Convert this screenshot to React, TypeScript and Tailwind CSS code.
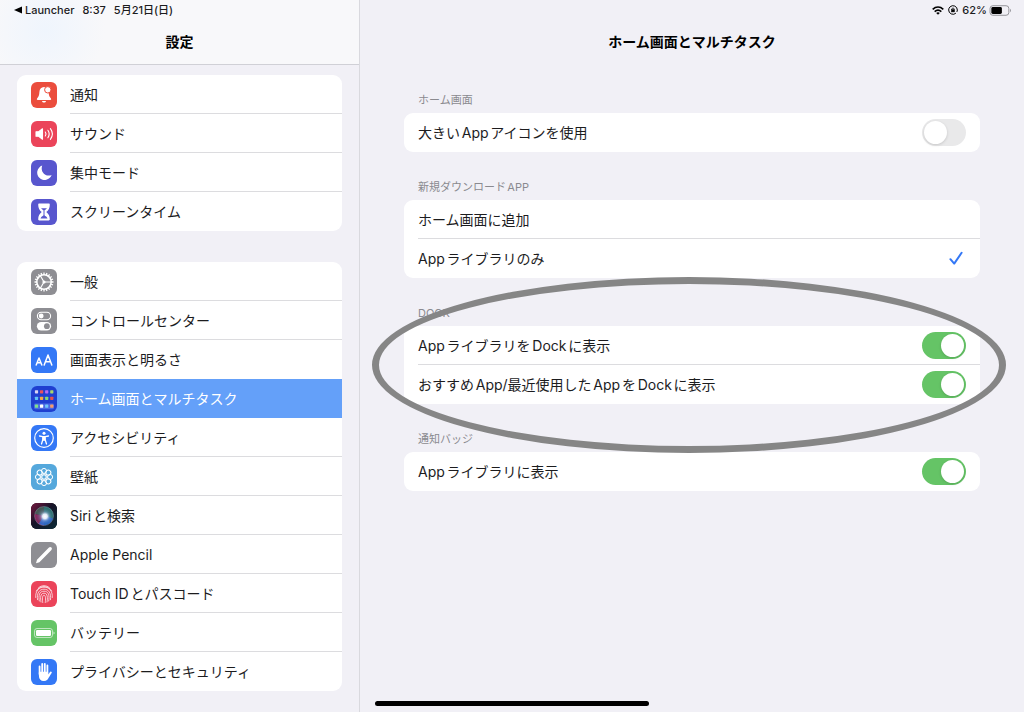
import { useState } from "react";
import type { ReactNode } from "react";

const spokes = Array.from({ length: 20 }, (_, i) => i * 18);
const petals = Array.from({ length: 8 }, (_, i) => i * 45);
const appColors = [
  ["#d8d4f2", "#e8505b", "#b56cf0", "#a8d66a"],
  ["#5fc3f5", "#f5a742", "#7fd877", "#e8504a"],
  ["#7fe08a", "#ffffff", "#6fc6f7", "#f59a6a"],
];

const icons: Record<string, ReactNode> = {
  notifications: (
    <g fill="#fff">
      <path d="M13 5c-3 0-4.4 2.2-4.6 5-.2 3.600-.8 4.700-2 6-.9 1-.7 2 .4 2h12.400c1.100 0 1.300-1 .4-2-1.200-1.300-1.800-2.400-2-6C17.400 7.200 16 5 13 5z" />
      <path d="M11 19h4c-.2 1-1 1.500-2 1.500s-1.800-.5-2-1.500z" />
      <circle cx="16.800" cy="7.800" r="3.200" stroke="#eb4d3d" strokeWidth="1" />
    </g>
  ),
  sounds: (
    <g fill="none" stroke="#fff" strokeWidth="1.100" strokeLinecap="round">
      <path d="M5 10.800h2.700L11.500 7.800v10.400L7.700 15.300H5z" fill="#fff" strokeLinejoin="round" />
      <path d="M14.300 11c.9 1.200.9 2.800 0 4M16.900 9.300c1.600 2.300 1.600 5.100 0 7.400M19.400 7.700c2.500 3.300 2.500 7.300 0 10.600" />
    </g>
  ),
  focus: <path d="M11.200 5.600A7.400 7.400 0 1 0 20.600 15C15.500 17.300 8.800 12.500 11.200 5.600z" fill="#fff" />,
  screenTime: (
    <g>
      <path d="M8.200 4.500h9.600c.6 0 1 .5 1 1.200 0 3.500-1.300 5.500-3.500 7.300 2.200 1.800 3.500 3.800 3.500 7.300 0 .7-.4 1.200-1 1.200H8.200c-.6 0-1-.5-1-1.200 0-3.500 1.300-5.500 3.500-7.300C8.500 11.200 7.200 9.200 7.200 5.700c0-.7.400-1.200 1-1.200z" fill="#fff" />
      <path d="M10 9.200h6L13 12zM9.500 19.500c.7-1.900 2-2.300 3-3.300V12h1v4.200c1 1 2.300 1.400 3 3.300z" fill="#5856ce" />
    </g>
  ),
  general: (
    <g fill="none" stroke="#fff">
      <circle cx="13" cy="13" r="7.200" strokeWidth="1.600" />
      <circle cx="13" cy="13" r="1.600" fill="#fff" stroke="none" />
      <path d="M13 13h7M13 13 9.500 7M13 13 9.500 19" strokeWidth="1.200" />
      {spokes.map((deg) => (
        <path key={deg} d="M13 5.700V3.500" strokeWidth="1.300" transform={`rotate(${deg} 13 13)`} />
      ))}
    </g>
  ),
  controlCenter: (
    <g>
      <rect x="6.400" y="4.300" width="13.200" height="7.400" rx="3.700" fill="none" stroke="#fff" strokeWidth="1.100" />
      <circle cx="10.200" cy="8" r="2.400" fill="#fff" />
      <rect x="5.900" y="14" width="14.200" height="8.400" rx="4.200" fill="#fff" />
      <circle cx="15.900" cy="18.200" r="2.900" fill="#8e8e93" />
    </g>
  ),
  display: (
    <g fill="none" stroke="#fff" strokeWidth="1.500" strokeLinecap="round" strokeLinejoin="round">
      <path d="M5.200 18l2.800-7L10.800 18M6.200 15.800h3.600" />
      <path d="M13.200 18L17 8L20.800 18M14.500 14.800h5" />
    </g>
  ),
  homeScreen: (
    <g>
      <rect x="3" y="17.600" width="20" height="5.600" rx="1.400" fill="#4a68e4" />
      {appColors.map((row, r) =>
        row.map((fill, c) => (
          <rect key={`${r}-${c}`} x={3.900 + c * 5.100} y={4.200 + r * 7.200 - (r === 1 ? 0.700 : 0)} width="3.200" height="3.200" rx=".6" fill={fill} />
        ))
      )}
    </g>
  ),
  accessibility: (
    <g fill="none" stroke="#fff" strokeLinecap="round" strokeLinejoin="round">
      <circle cx="13" cy="13" r="9.300" strokeWidth="1.200" />
      <circle cx="13" cy="8.300" r="1.500" fill="#fff" stroke="none" />
      <path d="M8.500 11l3.200.7h2.600l3.200-.7M11.800 12.500v2.300L10.500 19M14.200 12.500v2.300L15.500 19" strokeWidth="1.300" />
      <path d="M12 11.500h2v4h-2z" fill="#fff" strokeWidth=".5" />
    </g>
  ),
  wallpaper: (
    <g fill="none" stroke="#fff" strokeWidth="1">
      <circle cx="13" cy="13" r="2.200" />
      {petals.map((deg) => (
        <g key={deg} transform={`rotate(${deg} 13 13)`}>
          <circle cx="13" cy="6.900" r="2.500" />
          <circle cx="13" cy="10" r="1.100" fill="#fff" stroke="none" opacity=".6" />
        </g>
      ))}
    </g>
  ),
  siri: (
    <g>
      <defs>
        <linearGradient id="siriBack" x1="0" y1="0" x2="1" y2="1">
          <stop offset="0" stopColor="#7a1840" />
          <stop offset=".45" stopColor="#161428" />
          <stop offset="1" stopColor="#0c2c38" />
        </linearGradient>
        <radialGradient id="siriGlow" cx=".55" cy=".52" r=".5">
          <stop offset="0" stopColor="#fff" />
          <stop offset=".25" stopColor="#e4ecf8" />
          <stop offset=".5" stopColor="#8aa4d0" stopOpacity=".45" />
          <stop offset="1" stopColor="#2a3560" stopOpacity="0" />
        </radialGradient>
      </defs>
      <rect width="26" height="26" fill="url(#siriBack)" />
      <path d="M13 3.500c7 0 11 6 9 12L13 13z" fill="#2f8f80" opacity=".8" />
      <path d="M3.800 11c1-5 5-7.500 9.200-7.500V13z" fill="#4d6b5c" opacity=".8" />
      <path d="M3.800 11C2.500 18 8 23 13 22.500L14 13z" fill="#a62f6d" opacity=".8" />
      <path d="M8 20.500c5 4 12 1 14-5L13 12z" fill="#2675e8" opacity=".85" />
      <circle cx="13" cy="13" r="9.500" fill="url(#siriGlow)" stroke="#8b93ae" strokeOpacity=".6" strokeWidth=".7" />
    </g>
  ),
  pencil: (
    <path d="M5 21.300l1-3.500L17.700 5.700c.9-.9 2-.9 2.700-.2s.7 1.800-.2 2.700L8.400 20.200z" fill="#fff" />
  ),
  touchId: (
    <g fill="none" stroke="#fff" strokeWidth=".8" strokeLinecap="round" opacity=".9">
      <path d="M7.500 6.800c3.200-2.900 7.800-2.900 11 0M5.300 10c3-6 12.400-6 15.400 0M4.700 16.500c-.5-7 3.500-10.300 8.300-10.300s8.800 3.300 8.300 10.300" />
      <path d="M6.500 18.700C5.500 12 8.500 8.200 13 8.200s7.500 3.800 6.500 10.500M8.300 20c-1-5.500 0-9.800 4.700-9.800s5.700 4.300 4.700 9.800" />
      <path d="M10 21c-.8-4-.8-8.800 3-8.800s3.800 4.800 3 8.800M11.700 21.500c-.4-3-.6-7.300 1.300-7.300s1.700 4.300 1.300 7.300" />
    </g>
  ),
  battery: (
    <g>
      <rect x="3.500" y="8.500" width="18" height="9" rx="2.500" fill="none" stroke="#fff" strokeOpacity=".65" strokeWidth=".9" />
      <rect x="5" y="10" width="15" height="6" rx="1.200" fill="#fff" />
      <path d="M22.500 11.500c1.400.5 1.400 2.500 0 3z" fill="#fff" opacity=".7" />
    </g>
  ),
  privacy: (
    <g stroke="#fff" strokeWidth="1.800" strokeLinecap="round" fill="none">
      <path d="M8.600 7.500V15M11.200 5V14M13.800 4.800V14M16.400 6.500V15" />
      <path d="M19.800 13.500l-2.400 3.700" strokeWidth="2" />
      <path d="M8.600 13.500h7.800v3l1.500-.5c-1 3.500-2.700 5.300-5 5.300-2.800 0-4.300-2.300-4.300-5.300z" fill="#fff" strokeWidth="1.500" strokeLinejoin="round" />
    </g>
  ),
};

interface NavItem {
  id: string;
  label: string;
  color: string;
}

const navGroups: NavItem[][] = [
  [
    { id: "notifications", label: "通知", color: "bg-[#eb4d3d]" },
    { id: "sounds", label: "サウンド", color: "bg-[#eb445a]" },
    { id: "focus", label: "集中モード", color: "bg-[#5856ce]" },
    { id: "screenTime", label: "スクリーンタイム", color: "bg-[#5856ce]" },
  ],
  [
    { id: "general", label: "一般", color: "bg-[#8e8e93]" },
    { id: "controlCenter", label: "コントロールセンター", color: "bg-[#8e8e93]" },
    { id: "display", label: "画面表示と明るさ", color: "bg-[#3478f6]" },
    { id: "homeScreen", label: "ホーム画面とマルチタスク", color: "bg-[#1f3fd0]" },
    { id: "accessibility", label: "アクセシビリティ", color: "bg-[#3478f6]" },
    { id: "wallpaper", label: "壁紙", color: "bg-[#55a8dc]" },
    { id: "siri", label: "Siriと検索", color: "bg-black" },
    { id: "pencil", label: "Apple Pencil", color: "bg-[#8e8e93]" },
    { id: "touchId", label: "Touch IDとパスコード", color: "bg-[#eb445a]" },
    { id: "battery", label: "バッテリー", color: "bg-[#65c466]" },
    { id: "privacy", label: "プライバシーとセキュリティ", color: "bg-[#3478f6]" },
  ],
];

function NavGroup({ items, selected, onSelect }: { items: NavItem[]; selected: string; onSelect: (id: string) => void }) {
  return (
    <ul className="overflow-hidden rounded-[9px] bg-white">
      {items.map((item, i) => {
        const active = item.id === selected;
        const hideLine = i === items.length - 1 || active || items[i + 1].id === selected;
        return (
          <li key={item.id}>
            <a
              href={`#${item.id}`}
              aria-current={active ? "page" : undefined}
              onClick={() => onSelect(item.id)}
              className={`flex h-[39px] items-center gap-[13px] pl-[14px] ${active ? "bg-[#64a0f9] text-white" : ""}`}
            >
              <span className={`size-[26px] shrink-0 overflow-hidden rounded-md ${item.color}`}>
                <svg viewBox="0 0 26 26" className="size-full" aria-hidden="true">
                  {icons[item.id]}
                </svg>
              </span>
              <span className={`flex h-full flex-1 items-center border-b ${hideLine ? "border-transparent" : "border-[#dcdcdf]"}`}>
                {item.label}
              </span>
            </a>
          </li>
        );
      })}
    </ul>
  );
}

function Section({ title, children, overlay }: { title: string; children: ReactNode; overlay?: ReactNode }) {
  return (
    <section className="relative">
      <h2 className="flex h-[48px] items-end px-[14px] pb-[5px] text-[11px] leading-4 text-[#8a8a8f]">{title}</h2>
      <div className="overflow-hidden rounded-[9px] bg-white">{children}</div>
      {overlay}
    </section>
  );
}

function Row({ label, last, children }: { label: string; last?: boolean; children: ReactNode }) {
  return (
    <label className="block pl-[14px]">
      <span className={`flex h-[39px] items-center justify-between border-b pr-[14px] ${last ? "border-transparent" : "border-[#dcdcdf]"}`}>
        {label}
        {children}
      </span>
    </label>
  );
}

function Toggle({ defaultChecked }: { defaultChecked?: boolean }) {
  return (
    <input
      type="checkbox"
      role="switch"
      defaultChecked={defaultChecked}
      className="flex h-[27px] w-[44px] shrink-0 appearance-none items-center rounded-full bg-[#e9e9ea] p-[2px] before:size-[23px] before:rounded-full before:bg-white before:shadow-[0_1px_3px_rgba(0,0,0,0.15)] checked:justify-end checked:bg-[#65c466]"
    />
  );
}

function Choice({ checked, onChange }: { checked: boolean; onChange: () => void }) {
  return (
    <>
      <input type="radio" name="new-apps" checked={checked} onChange={onChange} className="sr-only" />
      {checked && (
        <svg viewBox="0 0 14 14" className="mr-[3px] size-[14px]" fill="none" stroke="#3478f6" strokeWidth="2" strokeLinecap="round" strokeLinejoin="round" aria-hidden="true">
          <path d="M1.400 8.200 5.200 12.600 12.600 1.800" />
        </svg>
      )}
    </>
  );
}

export default function App() {
  const [selected, setSelected] = useState("homeScreen");
  const [target, setTarget] = useState("library");

  return (
    <div className="flex min-h-screen bg-[#f1f0f6] font-[Inter,'Noto_Sans_CJK_JP',sans-serif] text-[14px] text-[#1c1c1e] [text-autospace:normal]">
      <aside className="w-[360px] shrink-0 border-r border-[#d9d9de]">
        <header className="h-[65px] border-b border-[#d0d0d6] bg-[#f8f8fa] bg-[radial-gradient(circle_at_45px_30px,#eff5fd_0px,#f8f8fa_60px)]">
          <div className="flex h-5 items-center pl-[14px] text-[11px] font-medium [text-autospace:no-autospace]">
            <a href="#launcher" className="flex items-center gap-[3px]">
              <svg viewBox="0 0 8 8" className="size-[8px]" aria-hidden="true">
                <path d="M0 4 8 .5v7z" />
              </svg>
              Launcher
            </a>
            <span className="ml-2">8:37</span>
            <span className="ml-2">5月21日(日)</span>
          </div>
          <h1 className="pt-3 text-center font-semibold leading-5 text-black">設定</h1>
        </header>
        <nav className="flex flex-col gap-[31px] px-[17px] pt-[10px] pb-[21px]">
          {navGroups.map((items, i) => (
            <NavGroup key={i} items={items} selected={selected} onSelect={setSelected} />
          ))}
        </nav>
      </aside>

      <main className="min-w-0 flex-1">
        <div className="flex h-5 items-center justify-end gap-1 pr-3 text-[11px] font-medium">
          <svg viewBox="0 0 14 10" className="h-[9px] w-[12px]" aria-label="Wi-Fi">
            <g fill="none" stroke="#000" strokeWidth="1.900">
              <path d="M.8 3.600C4.500.3 9.500.3 13.200 3.600M3.100 6.200c2.300-2 5.500-2 7.800 0" />
            </g>
            <path d="M4.900 7.800c1.200-1 3-1 4.200 0L7 10z" />
          </svg>
          <svg viewBox="0 0 12 12" className="size-[10px]" fill="none" stroke="#000" strokeWidth="1.200" aria-label="画面の向きのロック">
            <path d="M2.500 2.200A5.200 5.200 0 0 1 11.200 6M9.500 9.800A5.200 5.200 0 0 1 .8 6" />
            <path d="M.8 6a5.200 5.200 0 0 1 1.700-3.800M11.200 6a5.200 5.200 0 0 1-.6 2.300" />
            <rect x="4.200" y="5.600" width="3.600" height="2.700" fill="#000" strokeWidth=".6" />
            <path d="M4.900 5.500V4.600c0-1.500 2.200-1.500 2.200 0v.9" strokeWidth=".9" />
          </svg>
          <span>62%</span>
          <svg viewBox="0 0 24 12" className="-ml-[2px] h-[11px] w-[23px]" aria-hidden="true">
            <rect x=".6" y=".8" width="20.500" height="10.400" rx="3" fill="none" stroke="#8b8b90" strokeWidth="1" />
            <rect x="2" y="2.200" width="11.500" height="7.600" rx="1.600" />
            <path d="M22.400 4.200c1.300.5 1.300 3.100 0 3.600z" fill="#8b8b90" />
          </svg>
        </div>
        <h1 className="pt-3 text-center font-semibold leading-5 text-black">ホーム画面とマルチタスク</h1>

        <form className="pt-[13px] pr-11 pb-12 pl-11">
          <Section title="ホーム画面">
            <Row label="大きいAppアイコンを使用" last>
              <Toggle />
            </Row>
          </Section>
          <Section title="新規ダウンロードAPP">
            <Row label="ホーム画面に追加">
              <Choice checked={target === "home"} onChange={() => setTarget("home")} />
            </Row>
            <Row label="Appライブラリのみ" last>
              <Choice checked={target === "library"} onChange={() => setTarget("library")} />
            </Row>
          </Section>
          <Section
            title="DOCK"
            overlay={
              <div className="pointer-events-none absolute -top-px -right-[26px] -bottom-[49px] -left-8 z-10 rounded-[50%] border-[7px] border-[#868686]" />
            }
          >
            <Row label="AppライブラリをDockに表示">
              <Toggle defaultChecked />
            </Row>
            <Row label="おすすめApp/最近使用したAppをDockに表示" last>
              <Toggle defaultChecked />
            </Row>
          </Section>
          <Section title="通知バッジ">
            <Row label="Appライブラリに表示" last>
              <Toggle defaultChecked />
            </Row>
          </Section>
        </form>
      </main>

      <div className="fixed bottom-[6px] left-1/2 h-[5px] w-[274px] -translate-x-1/2 rounded-full bg-black" />
    </div>
  );
}
